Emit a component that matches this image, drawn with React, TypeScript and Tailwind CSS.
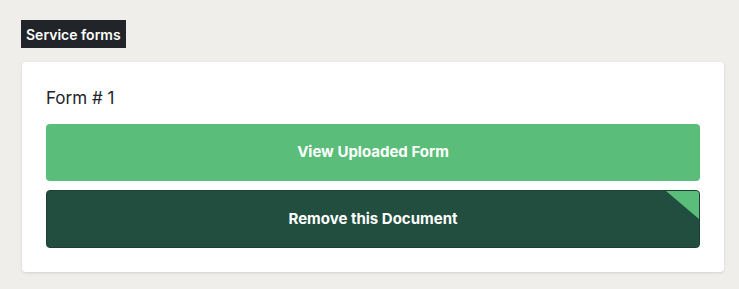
import React from "react";

export default function App() {
  return (
    <div className="min-h-[289px] w-full bg-[#efeeeb] pl-[21px] pr-[15px] pt-[20px] font-['Inter',sans-serif]">
      <div className="inline-flex h-[28px] items-center bg-[#212529] px-[5px] text-[14px] font-semibold text-white">
        Service forms
      </div>

      <div className="mt-[14px] ml-px rounded-[4px] bg-white px-[24px] pb-[24px] pt-[26px] shadow-[0_1px_3px_rgba(0,0,0,0.12)]">
        <div className="text-[17px] leading-[20px] text-[#212529]">Form # 1</div>

        <div className="mt-[16px] flex flex-col gap-[9px]">
          <button className="flex h-[57px] w-full items-center justify-center rounded-[4px] bg-[#5bbd7a] text-[15px] font-bold text-white">
            View Uploaded Form
          </button>

          <button className="relative flex h-[58px] w-full items-center justify-center overflow-hidden rounded-[4px] border border-[#1c3f33] bg-[#224e40] text-[15px] font-bold text-white">
            {/* corner flag */}
            <span className="absolute right-0 top-0 h-0 w-0 border-l-[33px] border-t-[28px] border-l-transparent border-t-[#5bbd7a]" />
            Remove this Document
          </button>
        </div>
      </div>
    </div>
  );
}
